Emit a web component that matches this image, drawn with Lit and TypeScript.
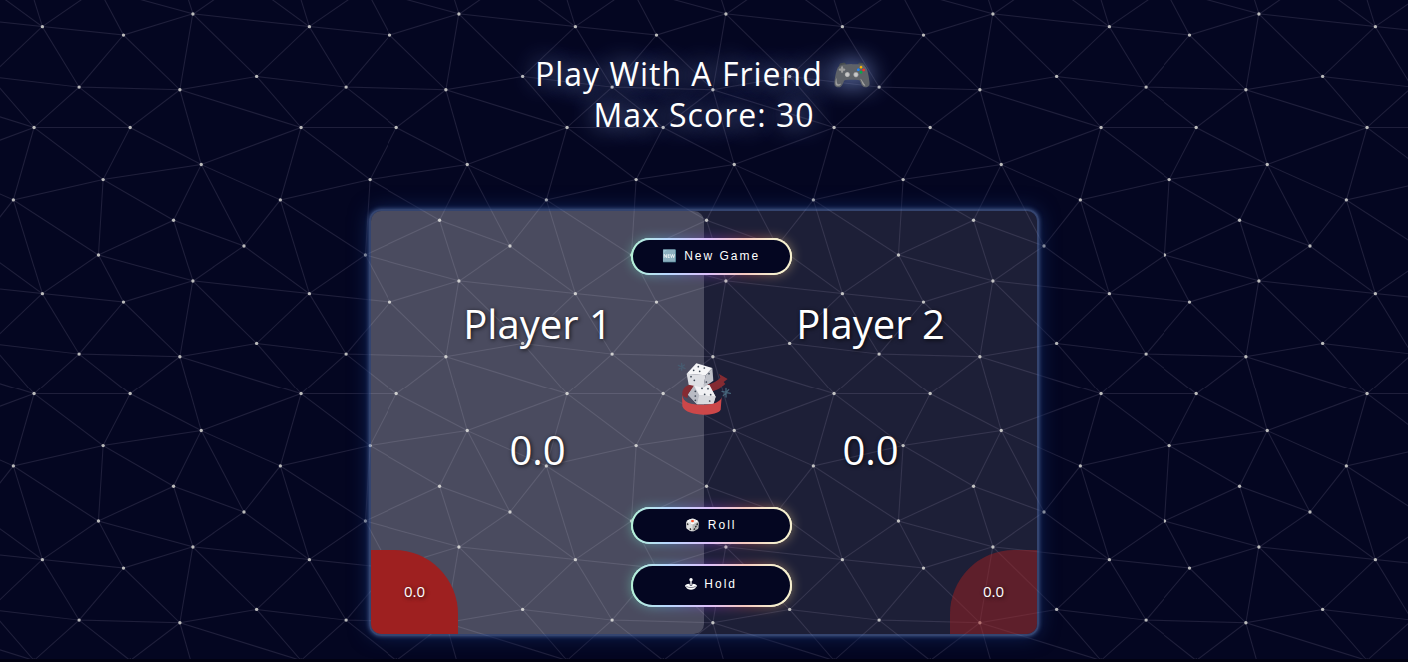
import { LitElement, html, css, unsafeCSS } from "lit";
import { customElement, state } from "lit/decorators.js";

const constellation = `<svg xmlns='http://www.w3.org/2000/svg' width='800' height='800' viewBox='0 0 800 800'><g fill='none' stroke='#1f1f3b' stroke-width='3'><path d='M769 229L1037 260.9M927 880L731 737 520 660 309 538 40 599 295 764 126.5 879.5 40 599-197 493 102 382-31 229 126.5 79.5-69-63'/><path d='M-31 229L237 261 390 382 603 493 308.5 537.5 101.5 381.5M370 905L295 764'/><path d='M520 660L578 842 731 737 840 599 603 493 520 660 295 764 309 538 390 382 539 269 769 229 577.5 41.5 370 105 295 -36 126.5 79.5 237 261 102 382 40 599 -69 737 127 880'/><path d='M520-140L578.5 42.5 731-63M603 493L539 269 237 261 370 105M902 382L539 269M390 382L102 382'/><path d='M-222 42L126.5 79.5 370 105 539 269 577.5 41.5 927 80 769 229 902 382 603 493 731 737M295-36L577.5 41.5M578 842L295 764M40-201L127 80M102 382L-261 269'/></g><g fill='#bbb'><circle cx='769' cy='229' r='5'/><circle cx='539' cy='269' r='5'/><circle cx='603' cy='493' r='5'/><circle cx='731' cy='737' r='5'/><circle cx='520' cy='660' r='5'/><circle cx='309' cy='538' r='5'/><circle cx='295' cy='764' r='5'/><circle cx='40' cy='599' r='5'/><circle cx='102' cy='382' r='5'/><circle cx='127' cy='80' r='5'/><circle cx='370' cy='105' r='5'/><circle cx='578' cy='42' r='5'/><circle cx='237' cy='261' r='5'/><circle cx='390' cy='382' r='5'/></g></svg>`;
const backdrop = unsafeCSS(`url("data:image/svg+xml,${encodeURIComponent(constellation)}")`);

@customElement("glow-button")
export class GlowButton extends LitElement {
  static styles = css`
    :host {
      display: block;
    }
    .button {
      position: relative;
      z-index: 0;
      display: block;
      box-sizing: border-box;
      width: 161px;
      height: 37px;
      padding: 0 0 2px;
      border: 2px solid transparent;
      border-radius: 22px;
      background:
        linear-gradient(#040621, #040621) padding-box,
        linear-gradient(90deg, #b4f0d6, #b8d8ff 22%, #dcc0fa 48%, #f6c8c0 70%, #f6f0d0 90%) border-box;
      color: #fff;
      font: 12px "Liberation Sans", Arial, sans-serif;
      letter-spacing: 2px;
      cursor: pointer;
    }
    .button::before {
      content: "";
      position: absolute;
      z-index: -2;
      inset: -2px;
      border-radius: 22px;
      background: linear-gradient(90deg, #6fdcb0, #6aa8f0 25%, #9040d0 50%, #d86050 75%, #e8d890);
      filter: blur(6px);
      opacity: 0.5;
    }
    .button::after {
      content: "";
      position: absolute;
      z-index: -1;
      inset: -2px;
      border: 2px solid transparent;
      border-radius: 22px;
      background:
        linear-gradient(#040621, #040621) padding-box,
        linear-gradient(90deg, #b4f0d6, #b8d8ff 22%, #dcc0fa 48%, #f6c8c0 70%, #f6f0d0 90%) border-box;
    }
    :host([tall]) .button {
      height: 43px;
      padding-bottom: 4px;
    }
  `;
  render() {
    return html`<button class="button" type="button"><slot></slot></button>`;
  }
}

@customElement("app-root")
export class AppRoot extends LitElement {
  @state() private active = 0;
  @state() private players = [
    { name: "Player 1", total: 0, current: 0 },
    { name: "Player 2", total: 0, current: 0 },
  ];

  static styles = css`
    :host {
      display: flow-root;
      box-sizing: border-box;
      min-height: 100vh;
      border-bottom: 3px solid #020212;
      background: ${backdrop} 0 0 / calc(800px / 3) #040621;
      color: #fff;
      font-family: "Open Sans", "Noto Sans", sans-serif;
    }
    .heading {
      margin: 53px 0 0;
      font-size: 32px;
      font-weight: 400;
      line-height: 41px;
      letter-spacing: 1px;
      text-align: center;
      text-shadow: 0 0 24px #8ca6e4;
    }
    .board {
      position: relative;
      box-sizing: border-box;
      display: grid;
      grid-template-columns: 1fr 1fr;
      width: 670px;
      max-width: 100%;
      min-height: 427px;
      margin: 74px auto 0;
      border: 2px solid rgba(100, 130, 190, 0.5);
      border-radius: 12px;
      background: rgba(255, 255, 255, 0.1);
      background-clip: padding-box;
      box-shadow: 0 0 4px #465c90, 0 0 20px #10265a;
    }
    .player {
      position: relative;
      display: flex;
      flex-direction: column;
      align-items: center;
      padding-top: 85px;
      border-radius: 10px;
      overflow: hidden;
      text-shadow: 1px 1px 4px rgba(0, 0, 0, 0.8);
    }
    .player.active {
      background: rgba(255, 255, 255, 0.2);
    }
    .name,
    .total {
      margin: 0;
      font-size: 40px;
      font-weight: 400;
      line-height: 56px;
    }
    .total {
      margin-top: 70px;
    }
    .current {
      position: absolute;
      bottom: 0;
      right: 0;
      display: grid;
      place-items: center;
      box-sizing: border-box;
      width: 87px;
      height: 84px;
      padding-bottom: 2px;
      border-radius: 64px 0 0 0;
      background: rgba(160, 32, 32, 0.5);
      font-size: 15px;
    }
    .active .current {
      right: auto;
      left: 0;
      border-radius: 0 64px 0 0;
      background: #9e2020;
    }
    .controls {
      position: absolute;
      inset: 27px 0 27px 14px;
      display: flex;
      flex-direction: column;
      align-items: center;
      gap: 20px;
      pointer-events: none;
    }
    .controls glow-button {
      pointer-events: auto;
    }
    .spacer {
      flex: 1;
    }
    .joystick {
      width: 12px;
      height: 12px;
      margin-right: 2px;
      vertical-align: -2px;
    }
    .dice {
      position: absolute;
      top: 150px;
      left: calc(50% - 28px);
      width: 56px;
      height: 56px;
    }
  `;

  render() {
    return html`
      <h1 class="heading">Play With A Friend 🎮<br />Max Score: 30</h1>
      <main class="board">
        ${this.players.map(
          (p, i) => html`
            <section class="player ${i === this.active ? "active" : ""}">
              <h2 class="name">${p.name}</h2>
              <p class="total">${p.total.toFixed(1)}</p>
              <div class="current">${p.current.toFixed(1)}</div>
            </section>
          `,
        )}
        <svg class="dice" viewBox="48 48 168 168" role="img" aria-label="Dice">
          <g stroke="#46657a" stroke-width="4" stroke-linecap="round">
            <path d="M65 55V76M55 61L75 71M57 72L73 60" opacity=".6" />
            <path d="M198 130V156M186 139L211 145M190 152L206 134" />
          </g>
          <path d="M67 152C64 130 79 117 108 117C143 125 166 113 181 98L177 87L203 102L191 111L196 117C170 140 145 147 109 133C90 131 84 145 82 160Z" fill="#852b32" />
          <path d="M84 149L102 122L148 120L167 155L160 178L111 178Z" fill="#c4c6cd" />
          <path d="M84 149L102 122L118 151L111 178Z" fill="#b9bbc4" />
          <path d="M102 122L148 120L167 155L118 150Z" fill="#f1f1f4" />
          <path d="M118 150L167 155L160 178L111 178Z" fill="#d8d9de" />
          <path d="M66 149C68 160 73 168 84 173C108 181 144 181 168 173C179 168 184 162 185 156L182 194C171 215 78 216 67 184Z" fill="#cc4749" />
          <path d="M80 86L109 55L157 69L137 91Z" fill="#f6f6f8" />
          <path d="M80 86L137 91L130 128L86 119Z" fill="#dedfe4" />
          <path d="M137 91L157 69L160 107L130 128Z" fill="#bfc1c9" />
          <g fill="#3c4654">
            <circle cx="115" cy="65" r="2.6" /><circle cx="133" cy="69" r="2.6" /><circle cx="101" cy="76" r="2.6" /><circle cx="119" cy="79" r="2.6" />
            <circle cx="93" cy="95" r="2.6" /><circle cx="103" cy="106" r="2.6" /><circle cx="147" cy="86" r="2.6" /><circle cx="139" cy="111" r="2.6" />
            <circle cx="126" cy="130" r="2.6" /><circle cx="144" cy="131" r="2.6" /><circle cx="134" cy="148" r="2.6" /><circle cx="152" cy="149" r="2.6" />
            <circle cx="106" cy="139" r="2.6" /><circle cx="106" cy="153" r="2.6" /><circle cx="106" cy="166" r="2.6" /><circle cx="149" cy="168" r="2.6" />
          </g>
        </svg>
        <div class="controls">
          <glow-button>🆕 New Game</glow-button>
          <span class="spacer"></span>
          <glow-button>🎲 Roll</glow-button>
          <glow-button tall
            ><svg class="joystick" viewBox="0 0 36 36" fill="#fff" aria-hidden="true">
              <circle cx="18" cy="5" r="5" />
              <path d="M16 8h4v14h-4z" />
              <path d="M14 17C5 17 0 20 0 24c0 1 1 2 3 3 2 6 8 8 15 8s13-2 15-8c2-1 3-2 3-3 0-4-5-7-14-7v4c0 3-8 3-8 0z" />
              <path d="M4 25c8 5 20 5 28 0" fill="none" stroke="#040621" stroke-width="1.5" />
            </svg>
            Hold</glow-button
          >
        </div>
      </main>
    `;
  }
}
